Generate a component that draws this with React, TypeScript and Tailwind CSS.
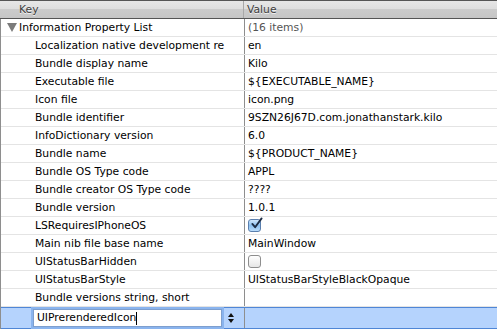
import React from 'react';

type Row = { key: string; value?: string; check?: boolean };

const rows: Row[] = [
  { key: 'Localization native development re', value: 'en' },
  { key: 'Bundle display name', value: 'Kilo' },
  { key: 'Executable file', value: '${EXECUTABLE_NAME}' },
  { key: 'Icon file', value: 'icon.png' },
  { key: 'Bundle identifier', value: '9SZN26J67D.com.jonathanstark.kilo' },
  { key: 'InfoDictionary version', value: '6.0' },
  { key: 'Bundle name', value: '${PRODUCT_NAME}' },
  { key: 'Bundle OS Type code', value: 'APPL' },
  { key: 'Bundle creator OS Type code', value: '????' },
  { key: 'Bundle version', value: '1.0.1' },
  { key: 'LSRequiresIPhoneOS', check: true },
  { key: 'Main nib file base name', value: 'MainWindow' },
  { key: 'UIStatusBarHidden', check: false },
  { key: 'UIStatusBarStyle', value: 'UIStatusBarStyleBlackOpaque' },
  { key: 'Bundle versions string, short', value: '' },
];

function Checkbox({ checked }: { checked: boolean }) {
  if (checked) {
    return (
      <div className="relative w-[13px] h-[13px] rounded-[3px] border border-[#5a7fae] bg-gradient-to-b from-[#cfe6fb] via-[#8cc0f0] to-[#b9dcfb]">
        <svg viewBox="0 0 14 14" className="absolute left-[1px] top-[-3px] w-[13px] h-[13px]">
          <path d="M2.5 7.5 L5.5 11 L12.5 1.5" fill="none" stroke="#1c2c44" strokeWidth="2" strokeLinecap="round" strokeLinejoin="round" />
        </svg>
      </div>
    );
  }
  return <div className="w-[13px] h-[13px] rounded-[3px] border border-[#8e8e8e] bg-gradient-to-b from-[#ffffff] to-[#e6e6e6]" />;
}

export default function App() {
  return (
    <div className="w-[497px] h-[329px] overflow-hidden bg-white text-[10.75px] text-black" style={{ fontFamily: '"DejaVu Sans", Verdana, sans-serif' }}>
      {/* header */}
      <div className="flex h-[19px] border-t border-b border-[#555555] bg-[linear-gradient(to_bottom,#e6e6e6_0%,#dedede_45%,#cbcbcb_50%,#c6c6c6_100%)] text-[#3e3e3e] leading-[17px]">
        <div className="w-[244px] pl-[19px] border-r border-[#a8a8a8] [text-shadow:0_1px_0_#f2f2f2]">Key</div>
        <div className="pl-[3px] [text-shadow:0_1px_0_#f2f2f2]">Value</div>
      </div>

      <div className="border-l border-[#8e8e8e]">
        <div className="flex h-[18px] border-b border-[#e4e4e4] leading-[17px]">
          <div className="w-[244px] flex items-center border-r border-[#8e8e8e]">
            <svg viewBox="0 0 10 9" className="ml-[6px] w-[10px] h-[9px] mr-[2px]">
              <polygon points="0,0 10,0 5,9" fill="#7b7b7b" />
            </svg>
            <span>Information Property List</span>
          </div>
          <div className="pl-[3px] text-[#555555]">(16 items)</div>
        </div>

        {rows.map((r) => (
          <div key={r.key} className="flex h-[18px] border-b border-[#e4e4e4] leading-[17px]">
            <div className="w-[244px] shrink-0 pl-[34px] border-r border-[#8e8e8e] whitespace-nowrap">{r.key}</div>
            <div className="pl-[3px] flex items-center whitespace-nowrap">
              {r.check === undefined ? r.value : <Checkbox checked={r.check} />}
            </div>
          </div>
        ))}

        {/* editing row */}
        <div className="flex h-[22px] border-y border-[#4f86d6] bg-[#b5d3fd]">
          <div className="w-[244px] shrink-0 flex items-center border-r border-[#8e8e8e]">
            <div className="ml-[32px] w-[189px] h-[18px] bg-white border border-[#7e9fce] shadow-[0_0_0_2px_#8ab4ee] flex items-center pl-[3px] leading-none">
              UIPrerenderedIcon<span className="inline-block w-px h-[13px] bg-black" />
            </div>
            <div className="ml-[6px] flex flex-col items-center gap-[2px]">
              <svg viewBox="0 0 6 4" className="w-[6px] h-[4px]"><polygon points="3,0 6,4 0,4" fill="#111" /></svg>
              <svg viewBox="0 0 6 4" className="w-[6px] h-[4px]"><polygon points="0,0 6,0 3,4" fill="#111" /></svg>
            </div>
          </div>
          <div className="flex-1" />
        </div>
      </div>
    </div>
  );
}
